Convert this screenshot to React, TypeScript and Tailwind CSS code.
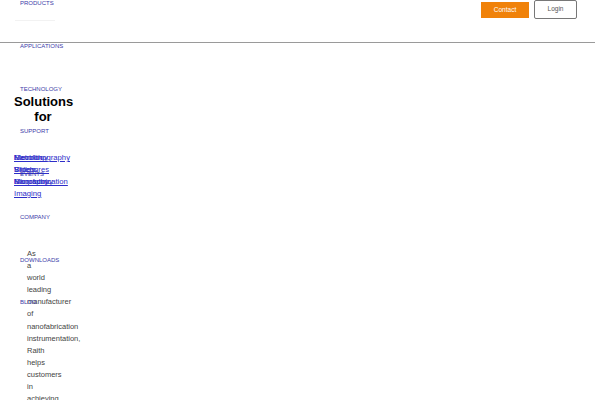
import React from 'react';

const navItems = ['PRODUCTS', 'APPLICATIONS', 'TECHNOLOGY', 'SUPPORT', 'EVENTS', 'COMPANY', 'DOWNLOADS', 'BLOG'];

const linksA = ['Nanolithography', 'Slides', 'Nanofabrication', 'Imaging'];
const linksB = ['Metrology', 'Videos', 'Microscopy'];
const linksC = ['Electron', 'Brochures', 'Biography'];

const words =
    'As a world leading manufacturer of nanofabrication instrumentation, Raith helps customers in achieving';

export default function App() {
    return (
        <div className="relative w-[600px] h-[400px] overflow-hidden bg-white font-['Liberation_Sans',Arial,sans-serif]">
            {/* Header */}
            <header className="h-[43px] w-[595px] border-b border-[#9a9a9a] flex justify-end items-start pr-[18px] gap-[5px]">
                <button className="mt-[2px] w-[48px] h-[16px] bg-[#f0820a] text-white text-[6.5px] leading-none">
                    Contact
                </button>
                <button className="w-[43px] h-[19px] border border-[#777] rounded-[2px] bg-white text-[#555] text-[6.5px] leading-none">
                    Login
                </button>
            </header>

            {/* Nav column, spills over the page */}
            <nav className="absolute left-[20px] top-0 flex flex-col">
                {navItems.map((item, i) => (
                    <div key={item} className="h-[42.75px] relative">
                        <a className="block text-[6px] leading-[7px] text-[#3a3aa8]">{item}</a>
                        {i === 0 && <div className="absolute left-[-5px] top-[20px] w-[40px] border-b border-[#f2f2f2]" />}
                    </div>
                ))}
            </nav>

            {/* Hero */}
            <main className="pl-[14px]">
                <div className="w-[58px] flex flex-col">
                    <h1 className="mt-[51px] text-center font-bold text-[13px] leading-[15px] text-black">
                        Solutions for
                    </h1>
                    <div className="mt-[28px] grid text-[7.7px] leading-[12px] text-[#2d2dc8] underline">
                        <div className="[grid-area:1/1] flex flex-col">
                            {linksA.map(l => <a key={l}>{l}</a>)}
                        </div>
                        <div className="[grid-area:1/1] flex flex-col">
                            {linksB.map(l => <a key={l}>{l}</a>)}
                        </div>
                        <div className="[grid-area:1/1] flex flex-col">
                            {linksC.map(l => <a key={l}>{l}</a>)}
                        </div>
                    </div>
                    <p className="mt-[48px] ml-[13px] w-[8px] text-[7.5px] leading-[12.1px] text-[#444]">
                        {words}
                    </p>
                </div>
            </main>
        </div>
    );
}
